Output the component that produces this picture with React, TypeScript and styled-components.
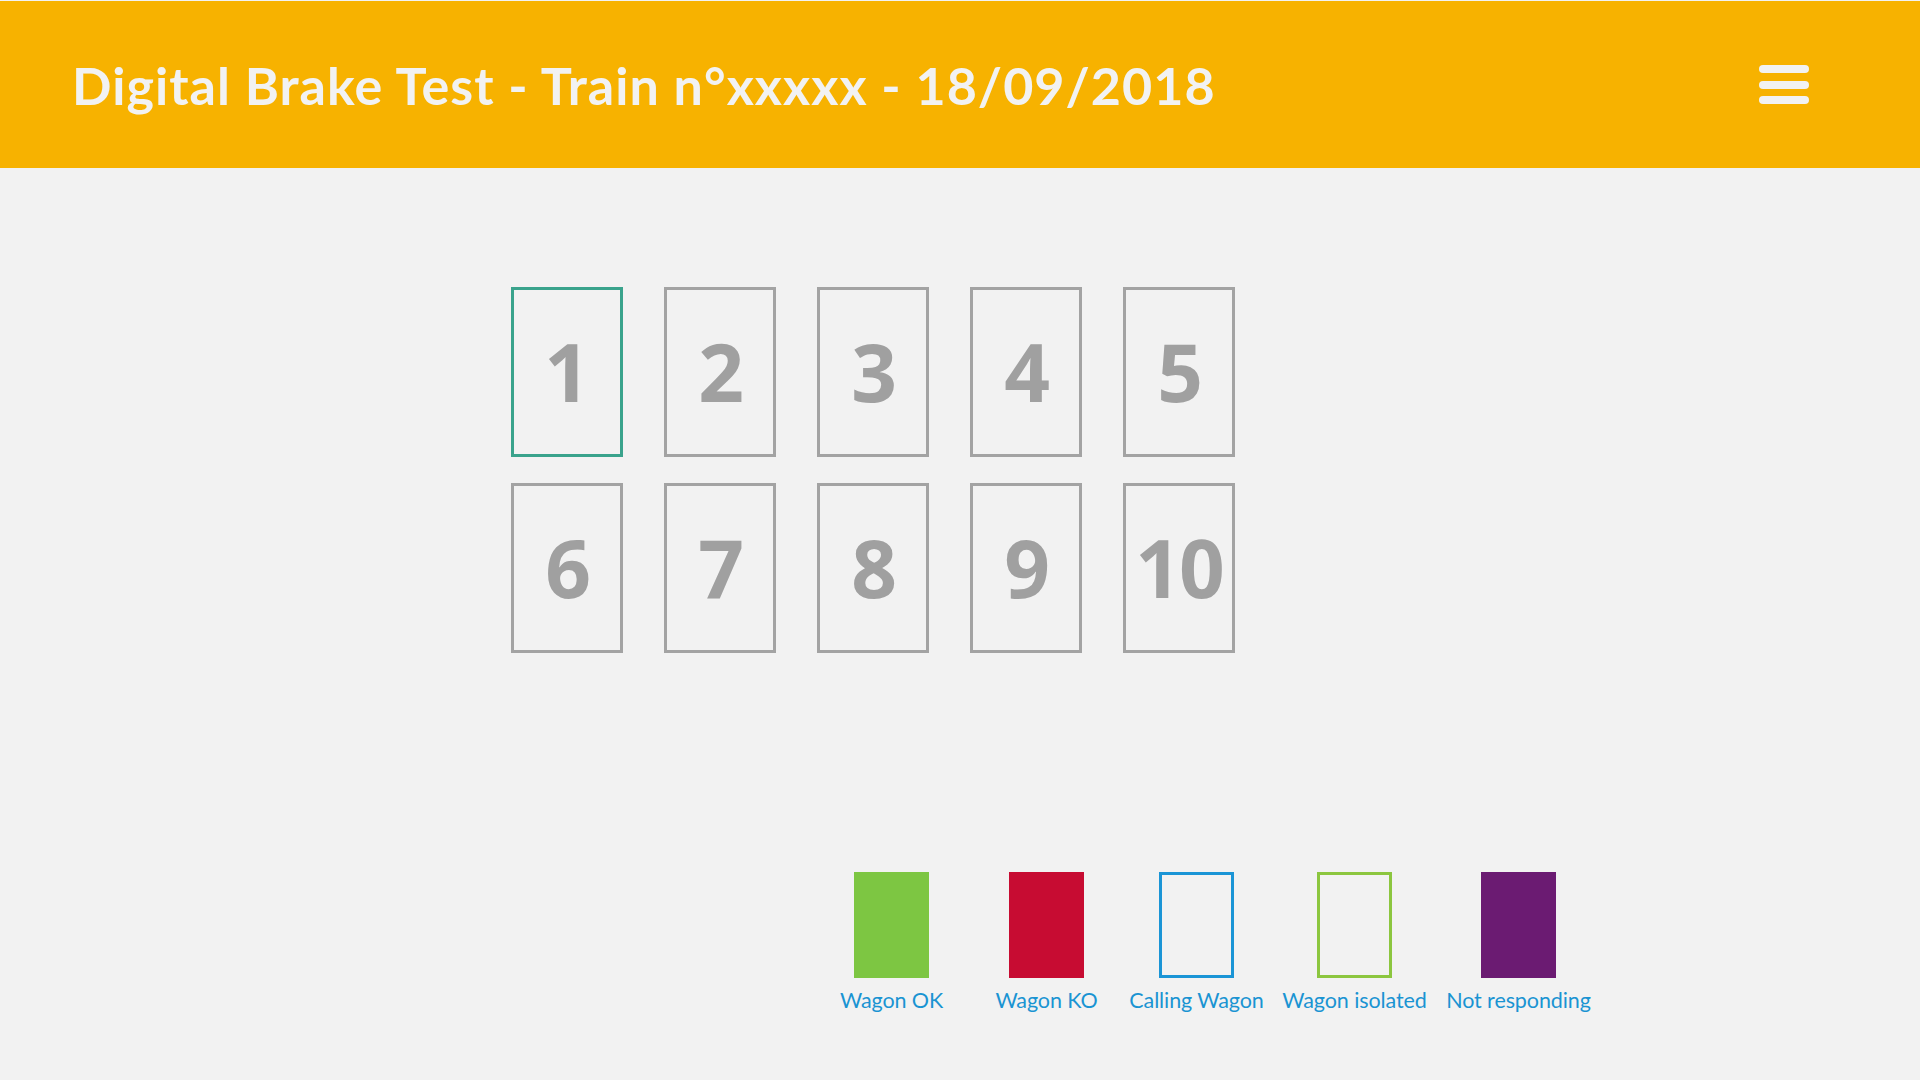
import React from "react";
import styled, { createGlobalStyle } from "styled-components";

const GlobalStyle = createGlobalStyle`
  html, body {
    margin: 0;
    padding: 0;
    background: #f2f2f2;
  }
  body {
    padding-top: 1px;
    font-family: Lato, "Open Sans", sans-serif;
  }
`;

const Page = styled.div`
  display: flex;
  flex-direction: column;
  min-height: 1079px;
  background: #f2f2f2;
`;

const Header = styled.header`
  height: 167px;
  background: #f7b200;
  display: flex;
  align-items: center;
  justify-content: space-between;
  padding: 0 111px 0 72px;
  box-sizing: border-box;
`;

const Title = styled.h1`
  margin: 0;
  font-family: Lato, "Open Sans", sans-serif;
  font-weight: 700;
  font-size: 52px;
  color: #f2f2f2;
  letter-spacing: 1.05px;
`;

const MenuButton = styled.button`
  display: flex;
  flex-direction: column;
  gap: 7.5px;
  width: 50px;
  padding: 0;
  border: none;
  background: transparent;
  cursor: pointer;
`;

const MenuBar = styled.span`
  display: block;
  height: 8px;
  border-radius: 4px;
  background: #f2f2f2;
`;

const WagonGrid = styled.div`
  display: grid;
  grid-template-columns: repeat(5, 112px);
  column-gap: 41px;
  row-gap: 26px;
  margin: 119px 0 0 511px;
`;

const WagonCard = styled.div<{ $active?: boolean }>`
  width: 112px;
  height: 170px;
  box-sizing: border-box;
  border: 3px solid ${(p) => (p.$active ? "#3aa38c" : "#a3a3a3")};
  display: flex;
  align-items: center;
  justify-content: center;
  padding-bottom: 4px;
  font-family: "Open Sans", Lato, sans-serif;
  font-weight: 700;
  font-size: 80px;
  color: #a0a0a0;
  letter-spacing: ${(p) => (p.$active ? "0" : "-2px")};
`;

const Legend = styled.div`
  display: grid;
  grid-template-columns: 159px 151px 149px 167px 161px;
  margin: 219px 0 0 812px;
`;

const LegendItem = styled.div`
  display: flex;
  flex-direction: column;
  align-items: center;
  gap: 9px;
`;

const Swatch = styled.div<{ $fill?: string; $border?: string }>`
  width: 75px;
  height: 106px;
  box-sizing: border-box;
  background: ${(p) => p.$fill ?? "transparent"};
  border: ${(p) => (p.$border ? `3px solid ${p.$border}` : "none")};
`;

const LegendLabel = styled.span`
  font-family: Lato, "Open Sans", sans-serif;
  font-size: 21.5px;
  color: #1a94d2;
  white-space: nowrap;
  letter-spacing: -0.1px;
`;

const legend = [
  { label: "Wagon OK", fill: "#7dc642" },
  { label: "Wagon KO", fill: "#c70c32" },
  { label: "Calling Wagon", border: "#1b95d6" },
  { label: "Wagon isolated", border: "#8cc63f" },
  { label: "Not responding", fill: "#6b1b72" },
];

export default function App() {
  return (
    <>
      <GlobalStyle />
      <Page>
        <Header>
          <Title>Digital Brake Test - Train n°xxxxx - 18/09/2018</Title>
          <MenuButton aria-label="Menu">
            <MenuBar />
            <MenuBar />
            <MenuBar />
          </MenuButton>
        </Header>
        <WagonGrid>
          {Array.from({ length: 10 }, (_, i) => (
            <WagonCard key={i} $active={i === 0}>
              {i + 1}
            </WagonCard>
          ))}
        </WagonGrid>
        <Legend>
          {legend.map((l) => (
            <LegendItem key={l.label}>
              <Swatch $fill={l.fill} $border={l.border} />
              <LegendLabel>{l.label}</LegendLabel>
            </LegendItem>
          ))}
        </Legend>
      </Page>
    </>
  );
}
